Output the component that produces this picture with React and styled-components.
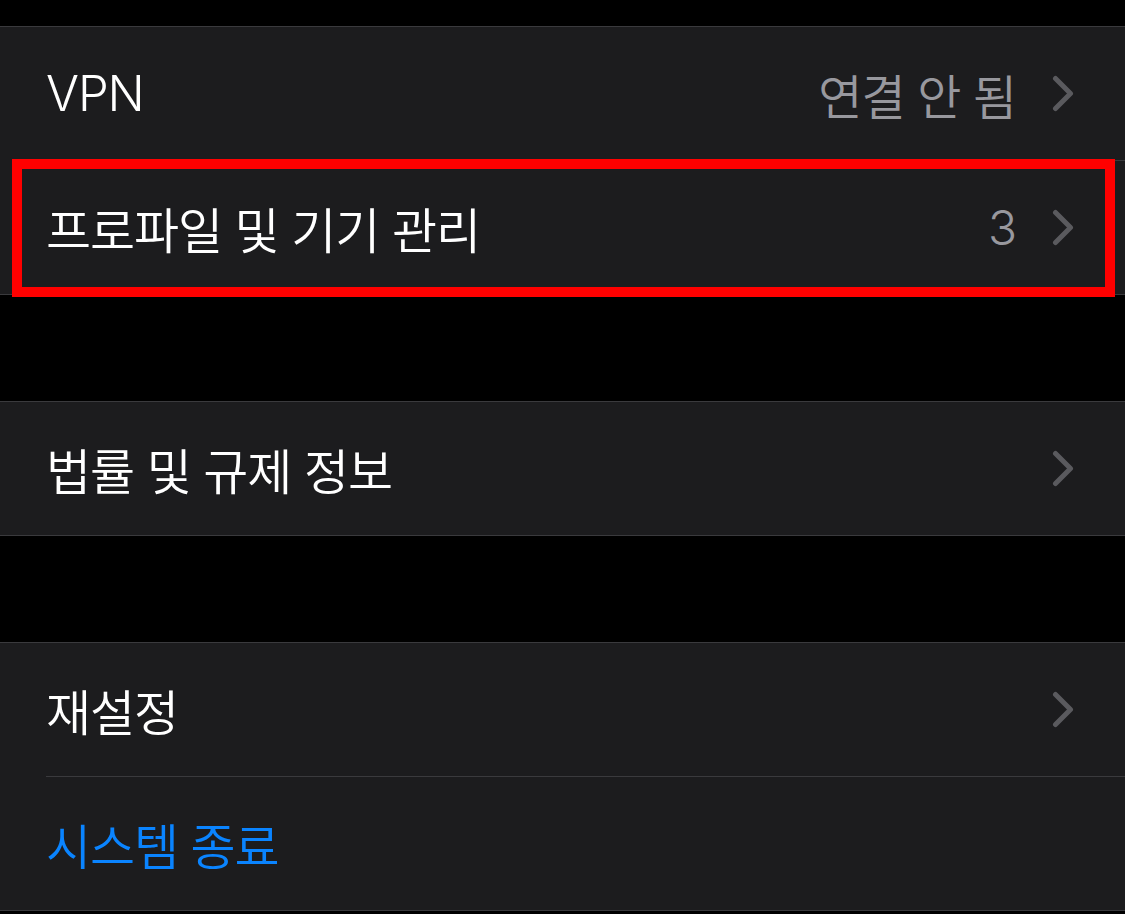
import styled, { createGlobalStyle } from "styled-components";

const GlobalStyle = createGlobalStyle`
  html, body {
    margin: 0;
    padding: 0;
    background: #000;
  }
  body {
    font-family: "Inter", "Noto Sans CJK KR", "Noto Sans", sans-serif;
    -webkit-font-smoothing: antialiased;
  }
`;

const Page = styled.div`
  background: #000;
  min-height: 914px;
  padding-top: 26px;
  display: flex;
  flex-direction: column;
  gap: 106px;
`;

const Group = styled.section`
  background: #1c1c1e;
  border-top: 1px solid #3a3a3d;
  border-bottom: 1px solid #3a3a3d;
  display: flex;
  flex-direction: column;
`;

const Row = styled.div`
  position: relative;
  height: 133px;
  display: flex;
  align-items: center;
  padding: 0 51px 0 46px;
  gap: 36px;
`;

const Label = styled.span`
  flex: 1;
  font-size: 49px;
  font-weight: 350;
  letter-spacing: -1.1px;
  color: ${({ $blue }) => ($blue ? "#0a84ff" : "#ffffff")};
  white-space: nowrap;
`;

const Value = styled.span`
  font-size: 48px;
  font-weight: 350;
  letter-spacing: -1px;
  color: #98989e;
  white-space: nowrap;
`;

const Divider = styled.div`
  height: 1px;
  margin-left: 46px;
  background: #3a3a3d;
`;

const Highlight = styled.div`
  position: absolute;
  top: -2px;
  bottom: -3px;
  left: 12px;
  right: 10px;
  border: 10px solid #ff0000;
  pointer-events: none;
`;

const Chevron = () => (
  <svg width="22" height="37" viewBox="0 0 22 37" fill="none">
    <polyline
      points="3.5,3.5 18.5,18.5 3.5,33.5"
      stroke="#5a5a5e"
      strokeWidth="5"
      strokeLinecap="round"
      strokeLinejoin="round"
    />
  </svg>
);

const SettingRow = ({ label, value, blue, chevron = true, highlighted }) => (
  <Row>
    <Label $blue={blue}>{label}</Label>
    {value && <Value>{value}</Value>}
    {chevron && <Chevron />}
    {highlighted && <Highlight />}
  </Row>
);

export default function App() {
  return (
    <>
      <GlobalStyle />
      <Page>
        <Group>
          <SettingRow label="VPN" value="연결 안 됨" />
          <Divider />
          <SettingRow label="프로파일 및 기기 관리" value="3" highlighted />
        </Group>
        <Group>
          <SettingRow label="법률 및 규제 정보" />
        </Group>
        <Group>
          <SettingRow label="재설정" />
          <Divider />
          <SettingRow label="시스템 종료" blue chevron={false} />
        </Group>
      </Page>
    </>
  );
}
